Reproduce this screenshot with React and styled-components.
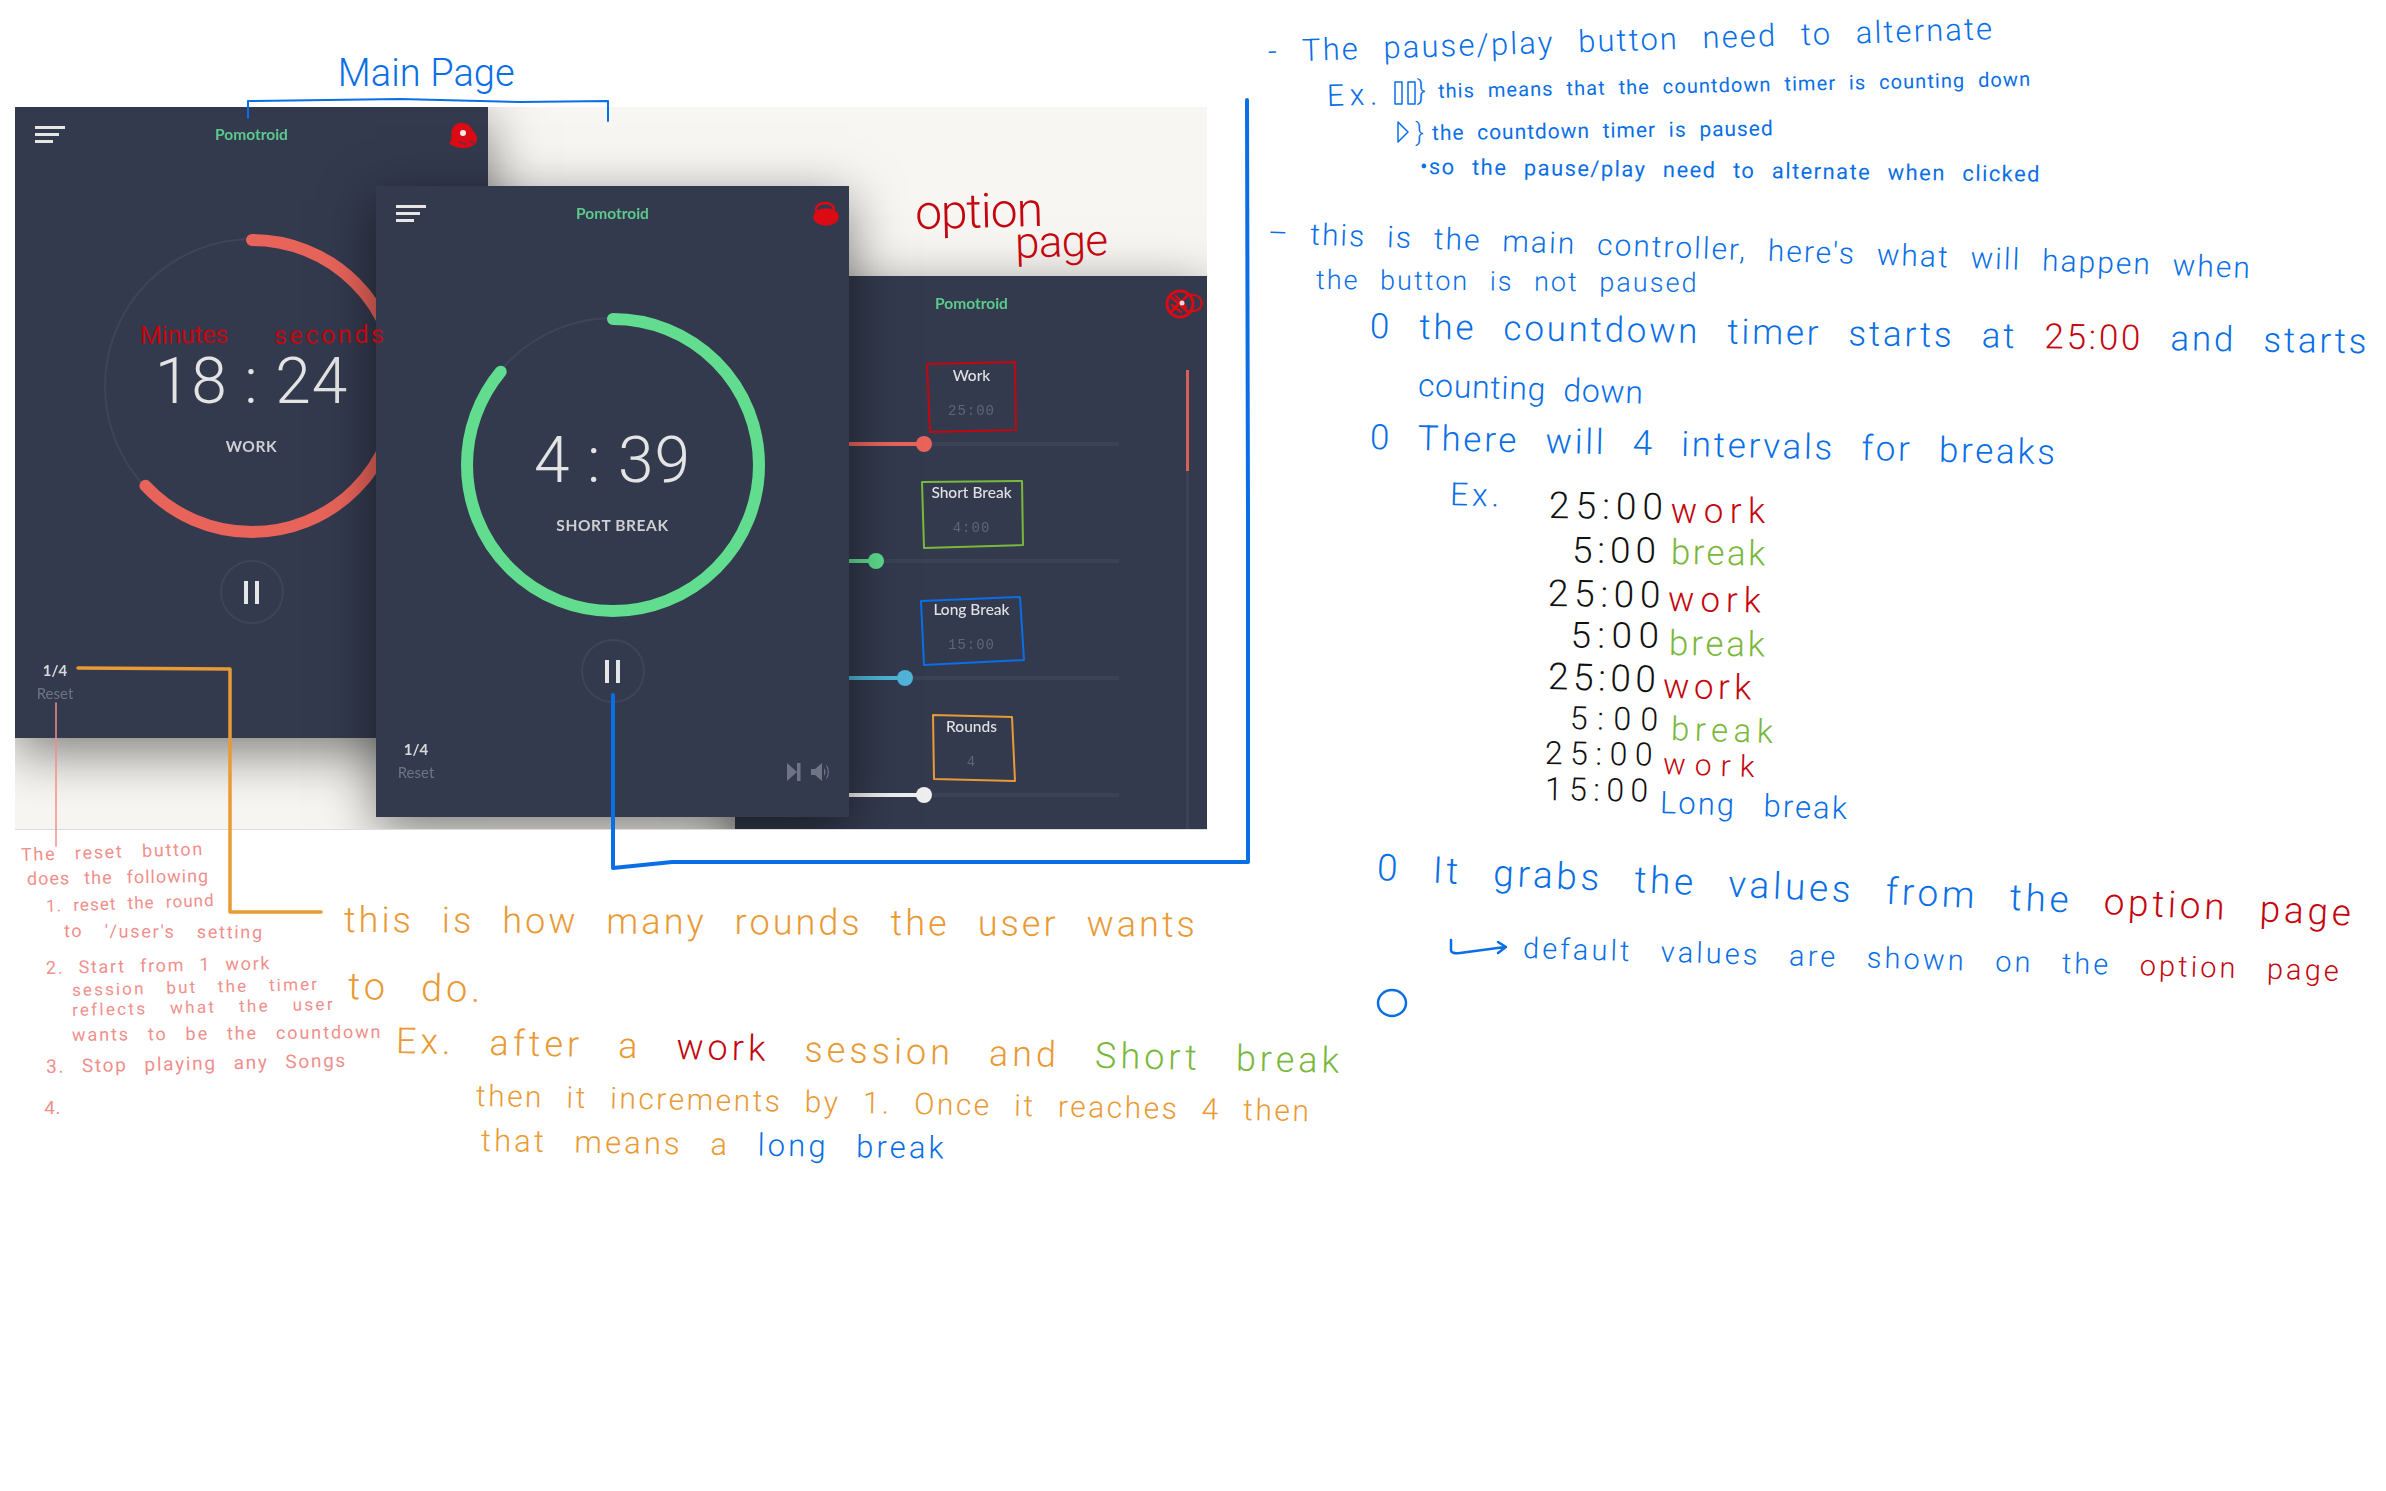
import { useLayoutEffect, useRef } from 'react'
import styled, { createGlobalStyle } from 'styled-components'

const BLUE = '#0a6fe6'
const RED = '#c4060f'
const BLOT = '#dc0a14'
const GREEN = '#7ab83c'
const ORANGE = '#e99a35'
const PINK = '#f08f8c'
const INK = '#111'

const GlobalStyle = createGlobalStyle`
  html, body { margin: 0; padding: 0; background: #fff; }
  body { font-family: "Lato", "Liberation Sans", sans-serif; }
`

const Canvas = styled.div`
  position: relative;
  width: 2386px;
  height: 1491px;
  overflow: hidden;
  background: #fff;
`
const Backdrop = styled.div`
  position: absolute;
  left: 15px;
  top: 107px;
  width: 1192px;
  height: 723px;
  overflow: hidden;
  background: #f7f6f2;
  border-bottom: 1px solid #dcdcdc;
  box-sizing: border-box;
  filter: blur(0.6px);
`
const Window = styled.div`
  position: absolute;
  left: ${p => p.$left}px;
  top: ${p => p.$top}px;
  width: 473px;
  height: ${p => p.$height}px;
  background: #333a4e;
  box-shadow: 0 14px 50px rgba(0, 0, 0, 0.5);
  display: flex;
  flex-direction: column;
  align-items: center;
`
const Header = styled.div`
  width: 100%;
  height: 54px;
  box-sizing: border-box;
  padding: 0 20px;
  display: grid;
  grid-template-columns: 1fr auto 1fr;
  align-items: center;
`
const Brand = styled.div`
  grid-column: 2;
  color: #5cc98d;
  font-size: 15.5px;
  font-weight: 700;
`
const Burger = styled.div`
  grid-column: 1;
  grid-row: 1;
  display: flex;
  flex-direction: column;
  gap: 4px;
  width: 30px;
`
const BurgerLine = styled.div`
  height: 3px;
  width: ${p => p.$w}px;
  background: #e6e6e6;
`
const Ring = styled.div`
  display: grid;
  width: 310px;
  height: 310px;
  margin-top: 70px;
  & > * { grid-area: 1 / 1; }
`
const Readout = styled.div`
  display: flex;
  flex-direction: column;
  align-items: center;
  padding-top: 126px;
`
const Time = styled.div`
  font-family: "Roboto", sans-serif;
  font-weight: 300;
  font-size: 64px;
  line-height: 50px;
  letter-spacing: ${p => p.$spacing}px;
  color: #e4e4e4;
  white-space: pre;
`
const Phase = styled.div`
  margin-top: 30px;
  font-size: 15.5px;
  font-weight: 700;
  letter-spacing: 0.6px;
  color: #cfd0d4;
`
const PauseCircle = styled.div`
  margin-top: 19px;
  width: 64px;
  height: 64px;
  box-sizing: border-box;
  border: 2px solid #3e4559;
  border-radius: 50%;
  display: flex;
  align-items: center;
  justify-content: center;
  gap: 7px;
`
const PauseBar = styled.div`
  width: 4px;
  height: 23px;
  background: #e6e6e6;
`
const Footer = styled.div`
  width: 100%;
  box-sizing: border-box;
  margin-top: 37px;
  padding: 0 18px 0 20px;
  display: flex;
  justify-content: space-between;
  align-items: flex-end;
`
const Counter = styled.div`
  display: flex;
  flex-direction: column;
  align-items: center;
  gap: 5px;
  width: 40px;
`
const Round = styled.div`
  font-size: 15px;
  font-weight: 700;
  line-height: 18px;
  color: #d8d8da;
`
const Reset = styled.div`
  font-size: 15px;
  line-height: 18px;
  color: #6f7483;
`
const FooterIcons = styled.div`
  display: flex;
  align-items: center;
  gap: 10px;
`
const Settings = styled.div`
  display: flex;
  flex-direction: column;
  align-items: center;
  gap: 36px;
  padding-top: 35px;
`
const Setting = styled.div`
  display: flex;
  flex-direction: column;
  align-items: center;
`
const SettingLabel = styled.div`
  font-size: 15.5px;
  font-weight: 500;
  line-height: 20px;
  color: #e2e2e4;
`
const SettingValue = styled.div`
  margin-top: 16px;
  font-family: "Liberation Mono", monospace;
  font-size: 14px;
  line-height: 20px;
  letter-spacing: 1px;
  color: #5f6577;
`
const Track = styled.div`
  position: relative;
  margin-top: 21px;
  width: 294px;
  height: 4px;
  background: #3b4256;
`
const TrackFill = styled.div`
  height: 100%;
  background: ${p => p.$color};
`
const Thumb = styled.div`
  position: absolute;
  top: -6px;
  width: 16px;
  height: 16px;
  margin-left: -8px;
  border-radius: 50%;
  background: ${p => p.$color};
`
const Scrollbar = styled.div`
  position: absolute;
  right: 19px;
  top: 94px;
  bottom: 0;
  width: 3px;
  background: #3b4256;
`
const ScrollThumb = styled.div`
  height: 101px;
  background: #d9605a;
`
const Overlay = styled.svg`
  position: absolute;
  left: 0;
  top: 0;
  pointer-events: none;
`
const Script = styled.div`
  position: absolute;
  left: ${p => p.$x}px;
  top: ${p => p.$y}px;
  font-family: "Roboto", "Liberation Sans", sans-serif;
  font-weight: ${p => (p.$size < 26 ? 400 : 300)};
  font-size: ${p => p.$size}px;
  line-height: 0.9;
  color: ${p => p.$color};
  white-space: pre;
  transform-origin: left center;
`

const SCALE = 2386 / 1568

// handwriting: the line runs from x0,y0 to x1,y1 (measured on the 1568px view), text is stretched to fit
function Note({ x0, y0, x1, y1, size, color, parts }) {
  const ref = useRef(null)
  const left = x0 * SCALE
  const right = x1 * SCALE
  const yl = y0 * SCALE
  const yr = y1 * SCALE
  const length = Math.hypot(right - left, yr - yl)
  const angle = (Math.atan2(yr - yl, right - left) * 180) / Math.PI

  useLayoutEffect(() => {
    const el = ref.current
    const text = el.textContent
    const gaps = text.split(' ').length - 1
    const slack = length - el.offsetWidth
    // half of the spare width goes between the letters, the rest between the words
    const toLetters = gaps > 0 ? slack * 0.5 : slack
    if (text.length > 1) el.style.letterSpacing = `${toLetters / (text.length - 1)}px`
    if (gaps > 0) el.style.wordSpacing = `${(slack - toLetters) / gaps}px`
  }, [length])

  return (
    <Script
      ref={ref}
      $x={left}
      $y={yl - size * 0.45}
      $size={size}
      $color={color}
      style={{ transform: `rotate(${angle}deg)` }}
    >
      {parts.map((part, i) =>
        typeof part === 'string' ? part : <span key={i} style={{ color: part[1] }}>{part[0]}</span>
      )}
    </Script>
  )
}

const n = (x0, y0, x1, y1, size, color, ...parts) => ({ x0, y0, x1, y1, size, color, parts })

const notes = [
  n(222, 48, 338, 48, 38, BLUE, 'Main Page'),
  n(601, 140, 685, 138, 48, RED, 'option'),
  n(667, 160, 728, 158, 44, RED, 'page'),
  n(92, 221, 150, 220, 25, RED, 'Minutes'),
  n(180, 221, 252, 220, 25, RED, 'seconds'),

  n(833, 34, 1309, 19, 31, BLUE, '- The pause/play button need to alternate'),
  n(872, 63, 905, 62, 30, BLUE, 'Ex.'),
  n(931, 60, 940, 60, 27, BLUE, '}'),
  n(945, 60, 1334, 52, 20, BLUE, 'this means that the countdown timer is counting down'),
  n(930, 87, 936, 87, 26, BLUE, '}'),
  n(941, 88, 1165, 85, 21, BLUE, 'the countdown timer is paused'),
  n(933, 110, 1340, 115, 22, BLUE, '•so the pause/play need to alternate when clicked'),
  n(833, 153, 1478, 176, 30, BLUE, '– this is the main controller, here\'s what will happen when'),
  n(865, 184, 1115, 186, 27, BLUE, 'the button is not paused'),
  n(900, 215, 1555, 225, 35, BLUE, '0 the countdown timer starts at ', ['25:00', RED], ' and starts'),
  n(932, 253, 1080, 258, 32, BLUE, 'counting down'),
  n(900, 288, 1350, 298, 35, BLUE, '0 There will 4 intervals for breaks'),
  n(953, 325, 985, 326, 32, BLUE, 'Ex.'),

  n(1018, 332, 1093, 333, 37, INK, '25:00'),
  n(1098, 336, 1160, 336, 35, RED, 'work'),
  n(1033, 362, 1088, 362, 37, INK, '5:00'),
  n(1098, 363, 1160, 364, 35, GREEN, 'break'),
  n(1017, 390, 1091, 391, 37, INK, '25:00'),
  n(1096, 394, 1157, 395, 35, RED, 'work'),
  n(1032, 418, 1090, 418, 37, INK, '5:00'),
  n(1097, 423, 1160, 424, 35, GREEN, 'break'),
  n(1017, 445, 1088, 447, 37, INK, '25:00'),
  n(1093, 451, 1151, 452, 35, RED, 'work'),
  n(1032, 472, 1090, 473, 32, INK, '5:00'),
  n(1098, 479, 1165, 481, 33, GREEN, 'break'),
  n(1015, 495, 1086, 496, 32, INK, '25:00'),
  n(1093, 502, 1153, 504, 30, RED, 'work'),
  n(1015, 519, 1083, 520, 32, INK, '15:00'),
  n(1091, 528, 1214, 532, 31, BLUE, 'Long break'),

  n(905, 570, 1545, 600, 37, BLUE, '0 It grabs the values from the ', ['option page', RED]),
  n(1001, 623, 1537, 638, 29, BLUE, 'default values are shown on the ', ['option page', RED]),

  n(14, 562, 133, 558, 18, PINK, 'The reset button'),
  n(18, 578, 137, 576, 18, PINK, 'does the following'),
  n(30, 596, 140, 592, 17, PINK, '1. reset the round'),
  n(42, 612, 172, 613, 18, PINK, 'to \'/user\'s setting'),
  n(30, 636, 177, 633, 18, PINK, '2. Start from 1 work'),
  n(47, 651, 208, 647, 17, PINK, 'session but the timer'),
  n(47, 664, 218, 660, 17, PINK, 'reflects what the user'),
  n(47, 680, 250, 678, 18, PINK, 'wants to be the countdown'),
  n(30, 701, 227, 697, 19, PINK, '3. Stop playing any Songs'),
  n(29, 728, 40, 728, 19, PINK, '4.'),

  n(226, 605, 785, 608, 36, ORANGE, 'this is how many rounds the user wants'),
  n(229, 648, 316, 650, 38, ORANGE, 'to do.'),
  n(260, 684, 880, 697, 36, ORANGE, 'Ex. after a ', ['work', RED], ' session and ', ['Short break', GREEN]),
  n(313, 720, 860, 730, 30, ORANGE, 'then it increments by 1. Once it reaches 4 then'),
  n(316, 750, 620, 755, 31, ORANGE, 'that means a ', ['long break', BLUE]),
]

const options = [
  { label: 'Work', value: '25:00', pct: 34, color: '#e8645a' },
  { label: 'Short Break', value: '4:00', pct: 17.5, color: '#5fdc8e' },
  { label: 'Long Break', value: '15:00', pct: 27.5, color: '#4fb4d8' },
  { label: 'Rounds', value: '4', pct: 34, color: '#eeeeee' },
]

function TimerRing({ color, progress }) {
  const r = 146
  const c = 2 * Math.PI * r
  return (
    <svg width="310" height="310" viewBox="0 0 310 310">
      <circle cx="155" cy="155" r={r + 1} fill="none" stroke="#3e4559" strokeWidth="2" />
      <circle
        cx="155"
        cy="155"
        r={r}
        fill="none"
        stroke={color}
        strokeWidth="12"
        strokeLinecap="round"
        strokeDasharray={`${c * progress} ${c}`}
        transform="rotate(-90 155 155)"
      />
    </svg>
  )
}

function TimerWindow({ left, top, time, spacing, phase, color, progress, icons }) {
  return (
    <Window $left={left} $top={top} $height={631}>
      <Header>
        <Burger>
          <BurgerLine $w={30} />
          <BurgerLine $w={24} />
          <BurgerLine $w={18} />
        </Burger>
        <Brand>Pomotroid</Brand>
      </Header>
      <Ring>
        <TimerRing color={color} progress={progress} />
        <Readout>
          <Time $spacing={spacing}>{time}</Time>
          <Phase>{phase}</Phase>
        </Readout>
      </Ring>
      <PauseCircle>
        <PauseBar />
        <PauseBar />
      </PauseCircle>
      <Footer>
        <Counter>
          <Round>1/4</Round>
          <Reset>Reset</Reset>
        </Counter>
        {icons && (
          <FooterIcons>
            <svg width="14" height="18" viewBox="0 0 14 18" fill="#6f7484">
              <path d="M0 0 L10 9 L0 18 Z" />
              <rect x="10" y="0" width="3.5" height="18" />
            </svg>
            <svg width="20" height="18" viewBox="0 0 20 18" fill="#6f7484">
              <path d="M0 6 H4 L11 0 V18 L4 12 H0 Z" />
              <path d="M13 5 Q16 9 13 13 Z" />
              <path d="M15 1 Q21 9 15 17 L15.5 14 Q18 9 15.5 4 Z" />
            </svg>
          </FooterIcons>
        )}
      </Footer>
    </Window>
  )
}

function OptionWindow() {
  return (
    <Window $left={720} $top={169} $height={600}>
      <Header>
        <Brand>Pomotroid</Brand>
      </Header>
      <Settings>
        {options.map(o => (
          <Setting key={o.label}>
            <SettingLabel>{o.label}</SettingLabel>
            <SettingValue>{o.value}</SettingValue>
            <Track>
              <TrackFill $color={o.color} style={{ width: `${o.pct}%` }} />
              <Thumb $color={o.color} style={{ left: `${o.pct}%` }} />
            </Track>
          </Setting>
        ))}
      </Settings>
      <Scrollbar>
        <ScrollThumb />
      </Scrollbar>
    </Window>
  )
}

// the red scribbles that blank out the close buttons
function Blots() {
  return (
    <g stroke={BLOT} fill="none" strokeLinecap="round">
      <path d="M453 129 C457 121 469 122 472 131 C478 135 478 144 470 146 C462 149 453 146 450 143 C455 140 450 134 453 129Z" fill={BLOT} strokeWidth="1.5" />
      <circle cx="463" cy="133" r="3" fill="#eee" stroke="none" />
      <path d="M470 141 L474 143 M459 142 L466 144" stroke="#6b2b3a" strokeWidth="1.5" />

      <ellipse cx="825" cy="209" rx="9" ry="6" strokeWidth="2.5" />
      <ellipse cx="826" cy="217" rx="12" ry="8" fill={BLOT} strokeWidth="1.5" />

      <circle cx="1180" cy="304" r="13" strokeWidth="3" />
      <path d="M1171 297 L1188 312 M1172 311 L1187 296 M1176 296 L1186 307 M1172 305 L1181 312" strokeWidth="2.5" />
      <circle cx="1182" cy="303" r="2.5" fill="#ddd" stroke="none" />
      <path d="M1189 295 C1204 292 1207 312 1191 311" strokeWidth="2" />
    </g>
  )
}

function Annotations() {
  return (
    <Overlay width="2386" height="1491" viewBox="0 0 2386 1491" fill="none" strokeLinejoin="round" strokeLinecap="round">
      <Blots />

      <path d="M248 118 L248 101 L400 99 L520 102 L608 101 L608 121" stroke={BLUE} strokeWidth="2" />
      <path d="M613 695 L613 868 L672 862 L1248 862 L1248 520 L1247 100" stroke={BLUE} strokeWidth="4" />
      <path d="M78 668 L230 669 L230 912 L321 912" stroke={ORANGE} strokeWidth="3.5" />
      <path d="M56 703 L56 846" stroke={PINK} strokeWidth="1.5" />

      <path d="M927 364 L1015 362 L1016 430 L930 432 L927 364" stroke={RED} strokeWidth="2" />
      <path d="M922 482 L1022 481 L1023 545 L924 548 L922 482" stroke={GREEN} strokeWidth="2" />
      <path d="M921 601 L1020 597 L1024 660 L924 665 L921 601" stroke={BLUE} strokeWidth="2" />
      <path d="M933 715 L1012 717 L1015 781 L934 779 L933 715" stroke={ORANGE} strokeWidth="2" />

      <path d="M1395 82 h7 v22 h-7 Z M1408 82 h7 v22 h-7 Z" stroke={BLUE} strokeWidth="1.5" />
      <path d="M1398 122 L1408 132 L1398 142 Z" stroke={BLUE} strokeWidth="1.5" />
      <path d="M1451 940 L1451 950 Q1451 954 1460 953 L1505 947 M1498 942 L1506 947 L1498 953" stroke={BLUE} strokeWidth="2.5" />
      <ellipse cx="1392" cy="1003" rx="14" ry="13" stroke={BLUE} strokeWidth="2.5" />
    </Overlay>
  )
}

export default function App() {
  return (
    <Canvas>
      <GlobalStyle />
      <Backdrop>
        <TimerWindow left={0} top={0} time="18 : 24" spacing={1} phase="WORK" color="#e8645a" progress={0.63} />
        <OptionWindow />
        <TimerWindow left={361} top={79} time="4 : 39" spacing={1} phase="SHORT BREAK" color="#62dd8f" progress={0.86} icons />
      </Backdrop>
      <Annotations />
      {notes.map((note, i) => (
        <Note key={i} {...note} />
      ))}
    </Canvas>
  )
}
